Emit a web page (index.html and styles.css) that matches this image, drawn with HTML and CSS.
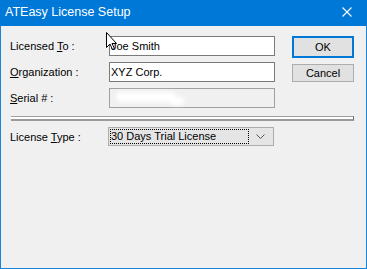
FILE: index.html
```html
<!DOCTYPE html>
<html lang="en">
  <head>
    <meta charset="UTF-8" />
    <title>ATEasy License Setup</title>
    <link rel="stylesheet" href="styles.css">
  </head>
  <body>
    <div class="window">
      <div class="titlebar">
        <span class="title">ATEasy License Setup</span>
        <svg class="close" width="10" height="10" viewBox="0 0 10 10">
          <path d="M0.5 0.5 L9.5 9.5 M9.5 0.5 L0.5 9.5" stroke="#fff" stroke-width="1.1" fill="none"/>
        </svg>
      </div>
      <div class="content">
        <div class="top">
          <div class="form">
            <div class="row">
              <label for="licensedTo">Licensed <u>T</u>o :</label>
              <input type="text" id="licensedTo" class="field" value="Joe Smith" />
            </div>
            <div class="row">
              <label for="organization"><u>O</u>rganization :</label>
              <input type="text" id="organization" class="field" value="XYZ Corp." />
            </div>
            <div class="row">
              <label><u>S</u>erial # :</label>
              <div class="field disabled">
                <span class="smudge"></span>
                <span class="smudge small"></span>
              </div>
            </div>
          </div>
          <div class="buttons">
            <button class="btn default">OK</button>
            <button class="btn">Cancel</button>
          </div>
        </div>
        <div class="separator"></div>
        <div class="row type-row">
          <label>License <u>T</u>ype :</label>
          <div class="combo">
            <span class="combo-text">30 Days Trial License</span>
            <svg class="chevron" width="9" height="5" viewBox="0 0 9 5">
              <path d="M0.5 0.5 L4.5 4.5 L8.5 0.5" stroke="#555" stroke-width="1" fill="none"/>
            </svg>
          </div>
        </div>
      </div>
      <svg class="cursor" width="12" height="19" viewBox="0 0 12 19">
        <path d="M0.5 0.5 L0.5 15.5 L4 12 L6.5 17.5 L8.5 16.5 L6 11.5 L10.5 11.5 Z" fill="#fff" stroke="#000" stroke-width="1"/>
      </svg>
    </div>
  </body>
</html>
```

FILE: styles.css
```css
body {
  margin: 0;
  background: #f0f0f0;
  font-family: "Liberation Sans", Arial, sans-serif;
  font-size: 11px;
  color: #000;
}
.window {
  position: relative;
  width: 367px;
  height: 269px;
  box-sizing: border-box;
  border: 1px solid #1883d7;
  border-top: none;
  background: #f0f0f0;
}
.titlebar {
  display: flex;
  align-items: center;
  justify-content: space-between;
  height: 26px;
  margin: 0 -1px;
  padding: 0 15px 0 5px;
  background: #0078d7;
  color: #fff;
}
.title {
  font-size: 12.5px;
  padding-bottom: 2px;
}
.close {
  display: block;
  margin-bottom: 2px;
}
.content {
  padding: 10px 12px 0 9px;
}
.top {
  display: flex;
  justify-content: space-between;
}
.form {
  display: flex;
  flex-direction: column;
  gap: 6px;
}
.row {
  display: flex;
  align-items: center;
}
.row label {
  width: 99px;
}
.field {
  width: 166px;
  height: 20px;
  box-sizing: border-box;
  margin: 0;
  padding: 0 0 0 1px;
  border: 1px solid #7a7a7a;
  background: #fff;
  font-family: inherit;
  font-size: 11px;
  color: #000;
  outline: none;
}
.field.disabled {
  position: relative;
  background: #f0f0f0;
  border-color: #a0a0a0;
}
.smudge {
  position: absolute;
  left: 6px;
  top: 3px;
  width: 60px;
  height: 10px;
  border-radius: 5px;
  background: #fff;
  filter: blur(2px);
}
.smudge.small {
  left: 60px;
  top: 8px;
  width: 14px;
  height: 8px;
}
.buttons {
  display: flex;
  flex-direction: column;
  gap: 6px;
}
.btn {
  width: 62px;
  height: 18px;
  box-sizing: border-box;
  padding: 0;
  border: 1px solid #adadad;
  background: #e1e1e1;
  font-family: inherit;
  font-size: 11px;
  color: #000;
}
.btn.default {
  height: 22px;
  border: 2px solid #0078d7;
}
.separator {
  height: 5px;
  box-sizing: border-box;
  margin: 8px 0 0 1px;
  background: #fff;
  border-top: 1px solid #a0a0a0;
  border-bottom: 2px solid #9a9a9a;
  border-right: 1px solid #696969;
}
.type-row {
  margin-top: 6px;
}
.combo {
  display: flex;
  align-items: center;
  justify-content: space-between;
  width: 166px;
  height: 19px;
  box-sizing: border-box;
  margin-left: -1px;
  padding: 2px 8px 2px 2px;
  border: 1px solid #adadad;
  background: #e5e5e5;
}
.combo-text {
  flex: 1;
  height: 13px;
  line-height: 13px;
  margin-right: 8px;
  outline: 1px dotted #000;
}
.chevron {
  display: block;
}
.cursor {
  position: absolute;
  left: 105px;
  top: 32px;
}
```
